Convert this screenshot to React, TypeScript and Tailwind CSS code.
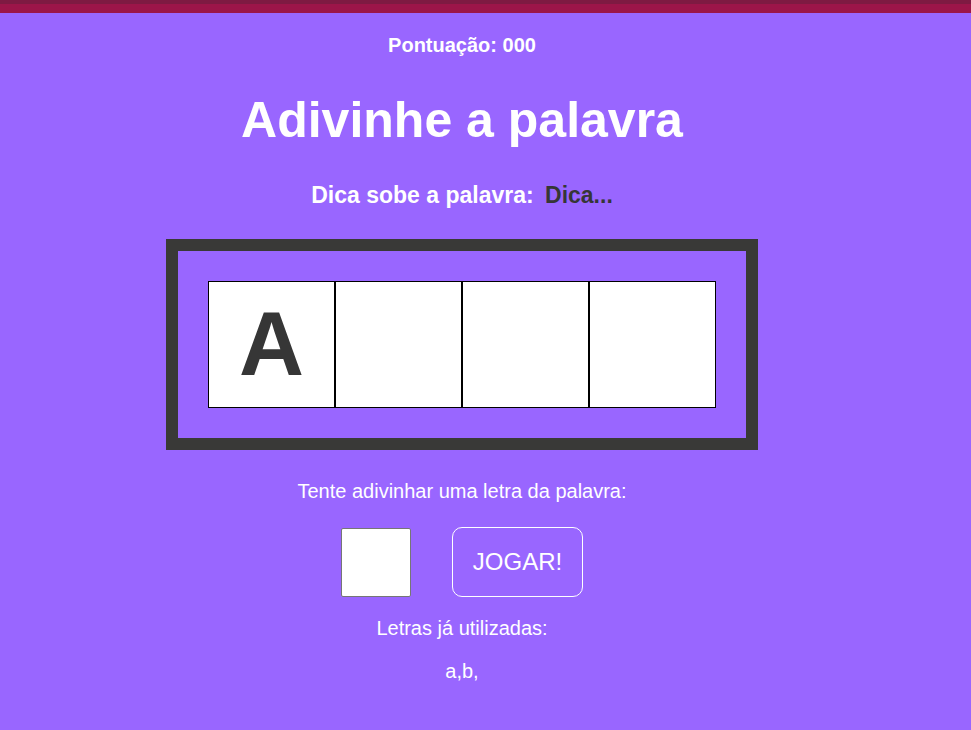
const letters = ['A', '', '', ''];
const used = ['a', 'b'];

export default function App() {
  return (
    <div className="min-h-screen bg-[#9966ff] font-['Liberation_Sans',Arial,sans-serif] text-white">
      <div className="h-[4px] bg-[#7e1a42]" />
      <div className="h-[9px] bg-[#9c1549]" />

      <div className="w-[924px] flex flex-col items-center">
        <p className="mt-[21px] text-[20px] font-bold leading-[23px]">Pontuação: 000</p>

        <h1 className="mt-[35px] text-[50px] font-bold leading-[57px]">Adivinhe a palavra</h1>

        <p className="mt-[33px] text-[23px] font-bold leading-[27px]">
          Dica sobe a palavra: <span className="ml-[5px] text-[#363636]">Dica...</span>
        </p>

        <div className="mt-[30px] border-[12px] border-[#393937] p-[30px] flex">
          {letters.map((l, i) => (
            <div
              key={i}
              className="w-[127px] h-[127px] border border-black bg-white flex items-center justify-center text-[90px] font-bold text-[#363636]"
            >
              {l}
            </div>
          ))}
        </div>

        <p className="mt-[30px] text-[20px] leading-[23px]">Tente adivinhar uma letra da palavra:</p>

        <div className="mt-[24px] flex items-center gap-[41px]">
          <input
            type="text"
            maxLength={1}
            className="w-[70px] h-[69px] bg-white border border-[#767676] rounded-[2px] text-black text-center text-[30px] outline-none"
          />
          <button className="w-[131px] h-[70px] border border-white rounded-[10px] text-[24px] text-white">
            JOGAR!
          </button>
        </div>

        <p className="mt-[20px] text-[20px] leading-[23px]">Letras já utilizadas:</p>
        <p className="mt-[20px] text-[20px] leading-[23px]">{used.map(u => u + ',').join('')}</p>
      </div>
    </div>
  );
}
